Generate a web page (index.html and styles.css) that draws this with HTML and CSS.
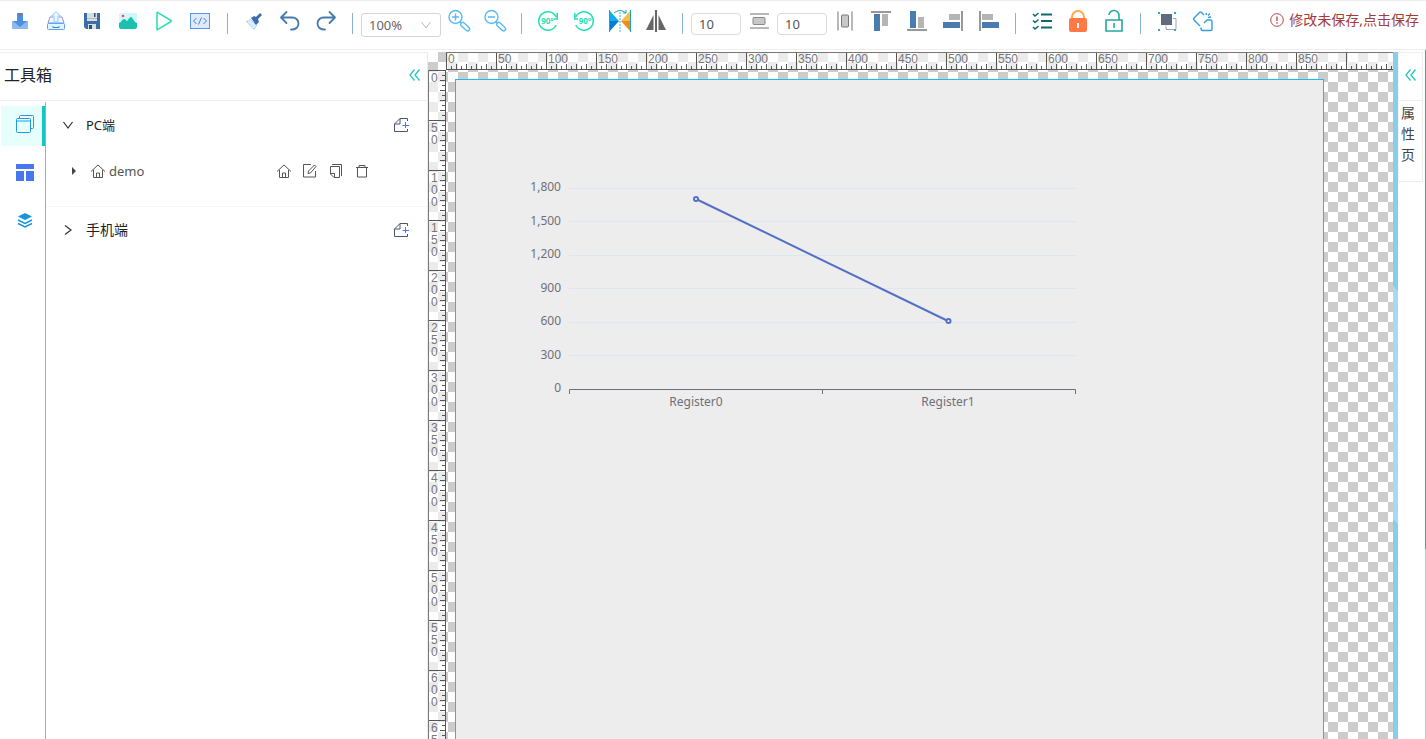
FILE: index.html
```html
<!DOCTYPE html>
<html lang="zh-CN">
<head>
<meta charset="utf-8">
<title>工具箱</title>
<link rel="stylesheet" href="styles.css">
</head>
<body>
<header class="toolbar">
  <button class="tool" aria-label="导入"><svg viewBox="0 0 24 24"><path fill="#8db9ee" d="M4 12h16v8H4z"/><path fill="#4a8fe0" d="M9 4h6v8h4l-7 6-7-6h4z"/><path fill="#d9486e" d="M11 5h2v2h-2z"/></svg></button>
  <button class="tool" aria-label="导出"><svg viewBox="0 0 24 24" fill="none"><path fill="#eef7ff" stroke="#9b8fd0" d="M6 8h3M15 8h3l2 6H4l2-6"/><path fill="#e8f7ff" stroke="#8fd0f5" d="M10 13V7H7.500l4.500-4.500L16.500 7H14v6z"/><rect x="3.500" y="14.500" width="17" height="6" rx="1" fill="#dff6ff" stroke="#5da4ea"/><path stroke="#3d85dc" d="M9 17v1.500h6V17"/></svg></button>
  <button class="tool" aria-label="保存"><svg viewBox="0 0 24 24"><path fill="#3c6ea3" d="M4 4h16v16H6l-2-2z"/><path fill="#d8dde2" d="M7 4h10v8H7zM8 15h8v5H8z"/><path fill="#2e4f78" d="M14 4h1.500v4H14zM9 16h3v4H9z"/><path stroke="#b5bcc4" d="M7 9.500h10"/></svg></button>
  <button class="tool" aria-label="图片"><svg viewBox="0 0 24 24"><rect x="3" y="4" width="18" height="15" rx="1" fill="#d3f5fd"/><path fill="#19c2ae" d="M3 14c2 0 3-4 5-4s2 2 3 2 2-4 4-4 3 6 6 6v4q0 2-2 2H5q-2 0-2-2z"/><circle cx="7" cy="7" r="1.300" fill="#ed4d5e"/></svg></button>
  <button class="tool" aria-label="运行"><svg viewBox="0 0 24 24" fill="none" stroke="#26deb5" stroke-width="1.500" stroke-linejoin="round"><path d="M5 3.500v17q0 .5.500.2L19 12.500q.5-.5 0-1L5.500 3.300q-.5-.3-.5.200z"/></svg></button>
  <button class="tool" aria-label="代码"><svg viewBox="0 0 24 24" fill="none" stroke="#5a96e6"><rect x="2.500" y="4.500" width="19" height="15" fill="#deebff"/><path stroke="#4a80d6" d="M8.500 9 5.500 12l3 3M15.500 9l3 3-3 3M13.500 8.500l-3 7"/></svg></button>
  <span class="separator"></span>
  <button class="tool" aria-label="清空"><svg viewBox="0 0 24 24"><path fill="#d8edff" stroke="#9bc7f2" stroke-dasharray="2 1" d="m4.500 12.500 4-2 6 6-2.500 4z"/><path fill="#3d69b0" d="m9 9 3-2 2 1 4-4 2 2-4 4 1 3-3 3z"/></svg></button>
  <button class="tool" aria-label="撤销"><svg viewBox="0 0 24 24" fill="none" stroke="#477aae" stroke-width="1.800" stroke-linecap="round" stroke-linejoin="round"><path d="M8.500 3 3 8.500 8.500 14M3 8.500h11.500a6 6 0 0 1 0 12H13"/></svg></button>
  <button class="tool" aria-label="重做"><svg viewBox="0 0 24 24" fill="none" stroke="#477aae" stroke-width="1.800" stroke-linecap="round" stroke-linejoin="round"><path d="M15.500 3 21 8.500 15.500 14M21 8.500H9.500a6 6 0 0 0 0 12H11"/></svg></button>
  <span class="separator"></span>
  <div class="zoom-select"><select aria-label="缩放"><option>100%</option><option>50%</option></select><svg viewBox="0 0 12 12" fill="none" stroke="#bbb"><path d="m1.500 3 4.500 6 4.500-6"/></svg></div>
  <button class="tool" aria-label="放大"><svg viewBox="0 0 24 24" fill="none" stroke="#58baf0" stroke-width="1.400"><circle cx="8.500" cy="8" r="6.500"/><path d="M5 8h7M8.500 4.500v7M13 13l1 1"/><rect x="13" y="15.500" width="10.500" height="4" rx="2" transform="rotate(43 18 17.500)"/></svg></button>
  <button class="tool" aria-label="缩小"><svg viewBox="0 0 24 24" fill="none" stroke="#58baf0" stroke-width="1.400"><circle cx="8.500" cy="8" r="6.500"/><path d="M5 8h7M13 13l1 1"/><rect x="13" y="15.500" width="10.500" height="4" rx="2" transform="rotate(43 18 17.500)"/></svg></button>
  <span class="separator"></span>
  <button class="tool" aria-label="顺时针旋转"><svg viewBox="0 0 24 24" fill="none" stroke="#22dfb6" stroke-width="1.500"><path d="M20.200 16a9.200 9.200 0 1 1 0-8M21.200 4v6H18"/><text x="11.500" y="15" class="deg">90°</text></svg></button>
  <button class="tool" aria-label="逆时针旋转"><svg viewBox="0 0 24 24" fill="none" stroke="#22dfb6" stroke-width="1.500"><path d="M3.800 16a9.200 9.200 0 1 0 0-8M2.800 4v6H6"/><text x="13" y="15" class="deg">90°</text></svg></button>
  <button class="tool" aria-label="水平翻转"><svg viewBox="0 0 24 24"><path fill="#14aef0" d="M1 1v11h10z"/><path fill="#087cd5" d="M1 12v11l10-11z"/><path fill="#f8bd46" d="M23 1v11H13z"/><path fill="#f38b18" d="M23 12v11L13 12z"/><path fill="none" stroke="#1ba8ad" d="M1.500 1v22M22.500 1v22M6 4q6-5 12 0M18 1v3h-3"/><path stroke="#35b9ce" stroke-dasharray="2 1" d="M12 3v20"/></svg></button>
  <button class="tool" aria-label="镜像"><svg viewBox="0 0 24 24" fill="#666"><path d="M11 1h2v22h-2zM9.500 6v15H2zM14.500 6v15H22z"/></svg></button>
  <span class="separator"></span>
  <input class="spacing" type="text" value="10" aria-label="垂直间距">
  <button class="tool" aria-label="垂直分布"><svg viewBox="0 0 24 24"><path stroke="#b8b8b8" stroke-width="2" d="M3 5h19M3 19h19"/><rect x="6" y="8.500" width="12" height="7" rx="1" fill="#c8c8c8" stroke="#888"/></svg></button>
  <input class="spacing" type="text" value="10" aria-label="水平间距">
  <button class="tool" aria-label="水平分布"><svg viewBox="0 0 24 24"><path stroke="#b8b8b8" stroke-width="2" d="M5 2.500v19M19 2.500v19"/><rect x="8.500" y="6" width="7" height="12" rx="1" fill="#c8c8c8" stroke="#777"/></svg></button>
  <button class="tool" aria-label="顶端对齐"><svg viewBox="0 0 24 24"><path fill="#999" d="M2 2h20v2H2z"/><path fill="#4a7caf" d="M5 5h6v17H5z"/><path fill="#b5b5b5" d="M13 5h6v12h-6z"/></svg></button>
  <button class="tool" aria-label="底端对齐"><svg viewBox="0 0 24 24"><path fill="#999" d="M2 20h20v2H2z"/><path fill="#4a7caf" d="M5 2h6v17H5z"/><path fill="#b5b5b5" d="M13 8h6v11h-6z"/></svg></button>
  <button class="tool" aria-label="右对齐"><svg viewBox="0 0 24 24"><path fill="#999" d="M20 2h2v20h-2z"/><path fill="#4a7caf" d="M2 13h17v6H2z"/><path fill="#b5b5b5" d="M8 5h11v6H8z"/></svg></button>
  <button class="tool" aria-label="左对齐"><svg viewBox="0 0 24 24"><path fill="#999" d="M2 2h2v20H2z"/><path fill="#4a7caf" d="M5 13h17v6H5z"/><path fill="#b5b5b5" d="M5 5h11v6H5z"/></svg></button>
  <span class="separator"></span>
  <button class="tool" aria-label="全选"><svg viewBox="0 0 24 24" fill="none" stroke="#0b6a6c" stroke-width="1.500"><path stroke-width="2" d="M11 5.500h11M11 12h11M11 18.500h11"/><path d="m3 5 2 2 3.500-3M3 11.500l2 2 3.500-3M3 18l2 2 3.500-3"/></svg></button>
  <button class="tool" aria-label="锁定"><svg viewBox="0 0 24 24"><path fill="none" stroke="#ffa94d" stroke-width="2" d="M6 10V8a6 6 0 0 1 12 0v2"/><rect x="3" y="9" width="18" height="14" rx="2" fill="#ff7845"/><path fill="#fff" d="M11 14h2v5h-2z"/></svg></button>
  <button class="tool" aria-label="解锁"><svg viewBox="0 0 24 24" fill="none" stroke="#25a99f" stroke-width="1.600"><path d="M4 11h16v11H4zM17 11V7a5 5 0 0 0-10-1M12 14v5"/></svg></button>
  <span class="separator"></span>
  <button class="tool" aria-label="组合"><svg viewBox="0 0 24 24"><path fill="#5f6c80" d="M6 5h11v11H6z"/><path fill="none" stroke="#a0a6b0" d="M18 9.500h3v11H11v-4"/><path fill="#35a1dc" d="M3 3h2v2H3zM19 3h2v2h-2zM3 20h2v2H3zM19 20h2v2h-2z"/></svg></button>
  <button class="tool" aria-label="取消组合"><svg viewBox="0 0 24 24" fill="none" stroke="#2e9edd" stroke-width="1.400" stroke-linejoin="round"><path d="M13 6 10.500 3.500q-1-1-2 0L3 9q-1 1 0 2l6 6M10 18.500V20q0 1.500 1.500 1.500h8q1.500 0 1.500-1.500v-7.500q0-1.500-1.500-1.500H16l-3 3M15 4l.5 2M17 8.500l3-.5M17 6.500 19 4.500"/></svg></button>
  <button class="save-state"><svg viewBox="0 0 14 14" fill="none" stroke="#b54545"><circle cx="7" cy="7" r="6.300"/><path stroke-width="1.300" d="M7 3.500V8M7 9.300v1.400"/></svg>修改未保存,点击保存</button>
</header>
<main class="workspace">
  <aside class="toolbox">
    <div class="toolbox-head"><h1>工具箱</h1><button class="collapse" aria-label="收起"><svg viewBox="0 0 12 12"><path d="M5.500.500 1 6l4.500 5.500M10.500.500 6 6l4.500 5.500"/></svg></button></div>
    <div class="toolbox-body">
      <nav class="rail">
        <button class="rail-tab active" aria-label="页面"><svg viewBox="0 0 20 20" fill="none" stroke="#2696e8"><path d="M4.500 4V2.500q0-1 1-1h12q1 0 1 1v11q0 1-1 1H16"/><rect x="1.500" y="4.500" width="14" height="14" rx="1"/><path stroke="#7bd0f5" stroke-width="2" d="M2 7h13"/></svg></button>
        <button class="rail-tab" aria-label="组件"><svg viewBox="0 0 20 20" fill="#4777ef"><path d="M1 2h18v5H1zM1 9h8v10H1zM11 9h8v10h-8z"/></svg></button>
        <button class="rail-tab" aria-label="图层"><svg viewBox="0 0 20 20" fill="#1595dc"><path d="m10 3 7 3.500-7 3.500-7-3.500z"/><path fill="none" stroke="#1595dc" stroke-width="1.500" d="m3 10 7 3.500 7-3.500M3 13.500l7 3.500 7-3.500"/></svg></button>
      </nav>
      <div class="tree">
        <section class="group open">
          <div class="group-head"><button class="toggle" aria-label="收起PC端"><svg viewBox="0 0 12 12"><path d="m1.500 3 4.500 6 4.500-6"/></svg></button><span class="group-name latin">PC端</span><button class="add" aria-label="新建PC页面"><svg viewBox="0 0 16 16" fill="none" stroke="#4b5570"><path d="M14.500 4V1.500H7L1.500 7v7.500h13V12M7 1.500V7H1.500"/><path stroke="#477cf0" d="M9.500 8.500h6.500M12.500 5v6"/></svg></button></div>
          <div class="page-row">
            <button class="expand" aria-label="展开"><svg viewBox="0 0 6 8"><path fill="#444" d="M1 0v8l4-4z"/></svg></button>
            <svg class="line-icon" viewBox="0 0 16 16"><path d="M1 8.500 8 2l7 6.500M3.500 7v7.500h9V7M6.500 14.500V10h3v4.500"/></svg>
            <span class="page-name">demo</span>
            <span class="actions">
              <button aria-label="设为首页"><svg class="line-icon" viewBox="0 0 16 16"><path d="M1 8.500 8 2l7 6.500M3.500 7v7.500h9V7M6.500 14.500V10h3v4.500"/></svg></button>
              <button aria-label="编辑"><svg class="line-icon" viewBox="0 0 16 16"><path d="M9 1.500H1.500v12.500h12V8M6 10.500 6.500 8l6-6L14 3.500 8.500 10z"/></svg></button>
              <button aria-label="复制"><svg class="line-icon" viewBox="0 0 16 16"><path d="M4 1.500h9.500V13M2.500 3.500h9v11H6L2.500 11zM6.500 14.500v-4h-4"/></svg></button>
              <button aria-label="删除"><svg class="line-icon" viewBox="0 0 16 16"><path d="M2 4.500h12M5 4.500v-2h6v2M3.500 4.500v9.500h9V4.500"/></svg></button>
            </span>
          </div>
        </section>
        <section class="group">
          <div class="group-head"><button class="toggle" aria-label="展开手机端"><svg viewBox="0 0 12 12"><path d="m3 1.500 6 4.500-6 4.500"/></svg></button><span class="group-name">手机端</span><button class="add" aria-label="新建手机页面"><svg viewBox="0 0 16 16" fill="none" stroke="#4b5570"><path d="M14.500 4V1.500H7L1.500 7v7.500h13V12M7 1.500V7H1.500"/><path stroke="#477cf0" d="M9.500 8.500h6.500M12.500 5v6"/></svg></button></div>
        </section>
      </div>
    </div>
  </aside>
  <section class="stage">
    <div class="ruler-x"></div>
    <div class="ruler-y"></div>
    <div class="viewport">
      <div class="page">
        <svg class="chart" width="580" height="240" viewBox="0 0 580 240" role="img" aria-label="Register0, Register1">
          <path stroke="#dfe5f2" d="M58 18.500h507M58 51.500h507M58 85.500h507M58 118.500h507M58 152.500h507M58 185.500h507"/>
          <path fill="none" stroke="#6e7079" d="M58.500 224v-4.500h506v4.500M311.500 219.500v4.500"/>
          <g class="axis-y"><text x="50" y="21">1,800</text><text x="50" y="55">1,500</text><text x="50" y="88">1,200</text><text x="50" y="122">900</text><text x="50" y="155">600</text><text x="50" y="189">300</text><text x="50" y="222">0</text></g>
          <g class="axis-x"><text x="185" y="236">Register0</text><text x="437" y="236">Register1</text></g>
          <g fill="#fff" stroke="#5470c6" stroke-width="2"><path d="m185 29 252 122"/><circle cx="185" cy="29" r="2"/><circle cx="437.500" cy="151" r="2"/></g>
        </svg>
      </div>
    </div>
  </section>
  <div class="splitter"><span class="splitter-grip"></span></div>
  <aside class="properties">
    <button class="collapse" aria-label="展开属性页"><svg viewBox="0 0 12 12"><path d="M5.500.500 1 6l4.500 5.500M10.500.500 6 6l4.500 5.500"/></svg></button>
    <button class="properties-tab">属性页</button>
  </aside>
  <div class="edge"></div>
</main>
<script src="rulers.js"></script>
</body>
</html>
```

FILE: styles.css
```css
* { box-sizing: border-box; }
body {
  margin: 0;
  height: 100vh;
  display: flex;
  flex-direction: column;
  overflow: hidden;
  background: #fff;
  color: #222;
  font: 14px/20px "Noto Sans", "Noto Sans CJK SC", sans-serif;
}
button { padding: 0; border: 0; background: none; color: inherit; font: inherit; cursor: pointer; }
svg { display: block; }

.toolbar {
  flex: none;
  display: flex;
  align-items: flex-start;
  height: 50px;
  padding: 8px 7px 0 2px;
  border-top: 1px solid #eee;
  border-bottom: 1px solid #eee;
}
.tool { flex: none; width: 36px; height: 24px; }
.tool svg { width: 24px; height: 24px; margin: 0 auto; }
.deg { fill: #22dfb6; stroke: none; font: bold 8px "Noto Sans", sans-serif; text-anchor: middle; }
.separator { flex: none; width: 1px; height: 21px; margin: 4px 8px 0; background: #8bb0dc; }
.separator:first-of-type { margin-left: 9px; }
.zoom-select { position: relative; flex: none; width: 80px; height: 24px; margin-top: 4px; }
.zoom-select select {
  width: 100%;
  height: 100%;
  padding: 0 7px;
  appearance: none;
  border: 1px solid #d5d5d5;
  border-radius: 3px;
  background: #fff;
  color: #666;
  font: 13px "Noto Sans", sans-serif;
}
.zoom-select svg { position: absolute; right: 9px; top: 6px; width: 12px; height: 12px; pointer-events: none; }
.spacing {
  flex: none;
  width: 50px;
  height: 22px;
  margin-top: 4px;
  padding: 0 7px;
  border: 1px solid #d9d9d9;
  border-radius: 4px;
  color: #555;
  font: 13px "Noto Sans", sans-serif;
}
.save-state { display: flex; align-items: center; gap: 5px; height: 22px; margin-left: auto; color: #a33b3b; white-space: nowrap; }
.save-state svg { width: 14px; height: 14px; }

.workspace { flex: 1; display: flex; min-height: 0; padding-top: 2px; }
.toolbox { flex: none; width: 428px; display: flex; flex-direction: column; border-top: 1px solid #eee; border-right: 1px solid #eee; }
.toolbox-head { flex: none; display: flex; align-items: center; justify-content: space-between; height: 48px; padding: 0 5px 3px 4px; border-bottom: 1px solid #eee; }
.toolbox-head h1 { margin: 0; font-size: 16px; font-weight: 400; }
.collapse { width: 14px; height: 14px; }
.collapse svg { width: 12px; height: 12px; margin: 0 auto; fill: none; stroke: #27c5c5; stroke-width: 1.3; }
.toolbox-body { flex: 1; display: flex; min-height: 0; margin-top: 1px; }
.rail { flex: none; width: 46px; display: flex; flex-direction: column; gap: 8px; padding: 4px 0 0 1px; border-right: 1px solid #8fafd8; }
.rail-tab { height: 40px; padding-bottom: 4px; border-right: 3px solid transparent; }
.rail-tab svg { width: 20px; height: 20px; margin-left: 14px; }
.rail-tab.active { border-right-color: #16c2c2; background: #e6fffb; }
.tree { flex: 1; }
.group { padding: 13px 18px 0 16px; }
.group.open { height: 105px; border-bottom: 1px solid #f5f5f5; }
.group-head { display: flex; align-items: center; height: 20px; }
.toggle svg { width: 12px; height: 12px; fill: none; stroke: #333; stroke-width: 1.2; }
.group-name { margin-left: 12px; }
.latin { font-size: 13px; }
.add { margin-left: auto; }
.add svg { width: 16px; height: 16px; }
.page-row { display: flex; align-items: center; height: 20px; margin-top: 26px; padding: 0 39px 0 9px; color: #555; font-size: 13px; }
.expand svg { width: 6px; height: 8px; }
.line-icon { width: 16px; height: 16px; fill: none; stroke: #555; }
.page-row > .line-icon { margin-left: 13px; }
.page-name { margin-left: 3px; }
.actions { display: flex; gap: 10px; margin-left: auto; }

.stage {
  flex: 1;
  display: grid;
  grid-template: 18px minmax(0, 1fr) / 18px minmax(0, 1fr);
  min-width: 0;
  overflow: hidden;
  background: repeating-conic-gradient(#ccc 0 25%, #fff 0 50%) 0 0 / 20px 20px;
}
.ruler-x, .ruler-y { display: flex; min-width: 0; min-height: 0; overflow: hidden; color: #777; font: 12px/12px "Liberation Sans", sans-serif; }
.ruler-x {
  grid-area: 1 / 2;
  border-top: 1px solid #777;
  border-bottom: 1px solid #555;
  background:
    repeating-linear-gradient(90deg, #555 0 1px, transparent 1px 5px) left bottom / 100% 3px no-repeat,
    repeating-linear-gradient(90deg, #555 0 1px, transparent 1px 10px) left bottom / 100% 5px no-repeat,
    rgba(255, 255, 255, .6);
}
.ruler-y {
  grid-area: 2 / 1;
  flex-direction: column;
  border-left: 1px solid #777;
  border-right: 1px solid #555;
  background:
    repeating-linear-gradient(180deg, #555 0 1px, transparent 1px 5px) right top / 3px 100% no-repeat,
    repeating-linear-gradient(180deg, #555 0 1px, transparent 1px 10px) right top / 5px 100% no-repeat,
    rgba(255, 255, 255, .6);
}
.ruler-x span { flex: none; width: 50px; padding-left: 1px; border-left: 1px solid #555; }
.ruler-y span { flex: none; height: 50px; padding: 1px 9px 0 2px; border-top: 1px solid #555; word-break: break-all; }
.viewport { grid-area: 2 / 2; padding: 9px 69px 0 9px; overflow: hidden; }
.page { position: relative; height: 100%; border: 1px solid #1bbcee; border-bottom: 0; background: #ededed; }
.chart { position: absolute; left: 55px; top: 90px; }
.chart text { fill: #6e7079; font: 12px "Noto Sans", sans-serif; }
.axis-y { text-anchor: end; }
.axis-x { text-anchor: middle; }

.splitter { flex: none; width: 5px; padding-top: 234px; background: #87ceeb; }
.splitter-grip { display: block; height: 238px; background: #a5daf0; clip-path: polygon(0 0, 100% 5px, 100% 100%, 0 233px); }
.properties { flex: none; width: 25px; height: 130px; border: 1px solid #eee; border-left-color: #f5f5f5; }
.properties .collapse { display: block; width: 100%; height: 47px; padding-bottom: 4px; }
.properties-tab { display: block; width: 100%; height: 81px; padding: 0 7px 16px 2px; border-top: 1px solid #eee; color: #444; line-height: 21px; text-align: left; word-break: break-all; }
.edge { flex: none; width: 1px; margin: -2px 0 0 2px; background: linear-gradient(#26b5b5 0 499px, #8edfd5 499px); }
```

FILE: rulers.js
```js
const fillRuler = (selector, labels, marks) => {
  const ruler = document.querySelector(selector);
  for (let i = 0; i < marks; i++) {
    const mark = document.createElement('span');
    mark.textContent = i < labels ? String(i * 50) : '';
    ruler.append(mark);
  }
};
const down = Math.ceil(document.querySelector('.ruler-y').clientHeight / 50);
fillRuler('.ruler-x', 18, 40);
fillRuler('.ruler-y', down, down);
```
